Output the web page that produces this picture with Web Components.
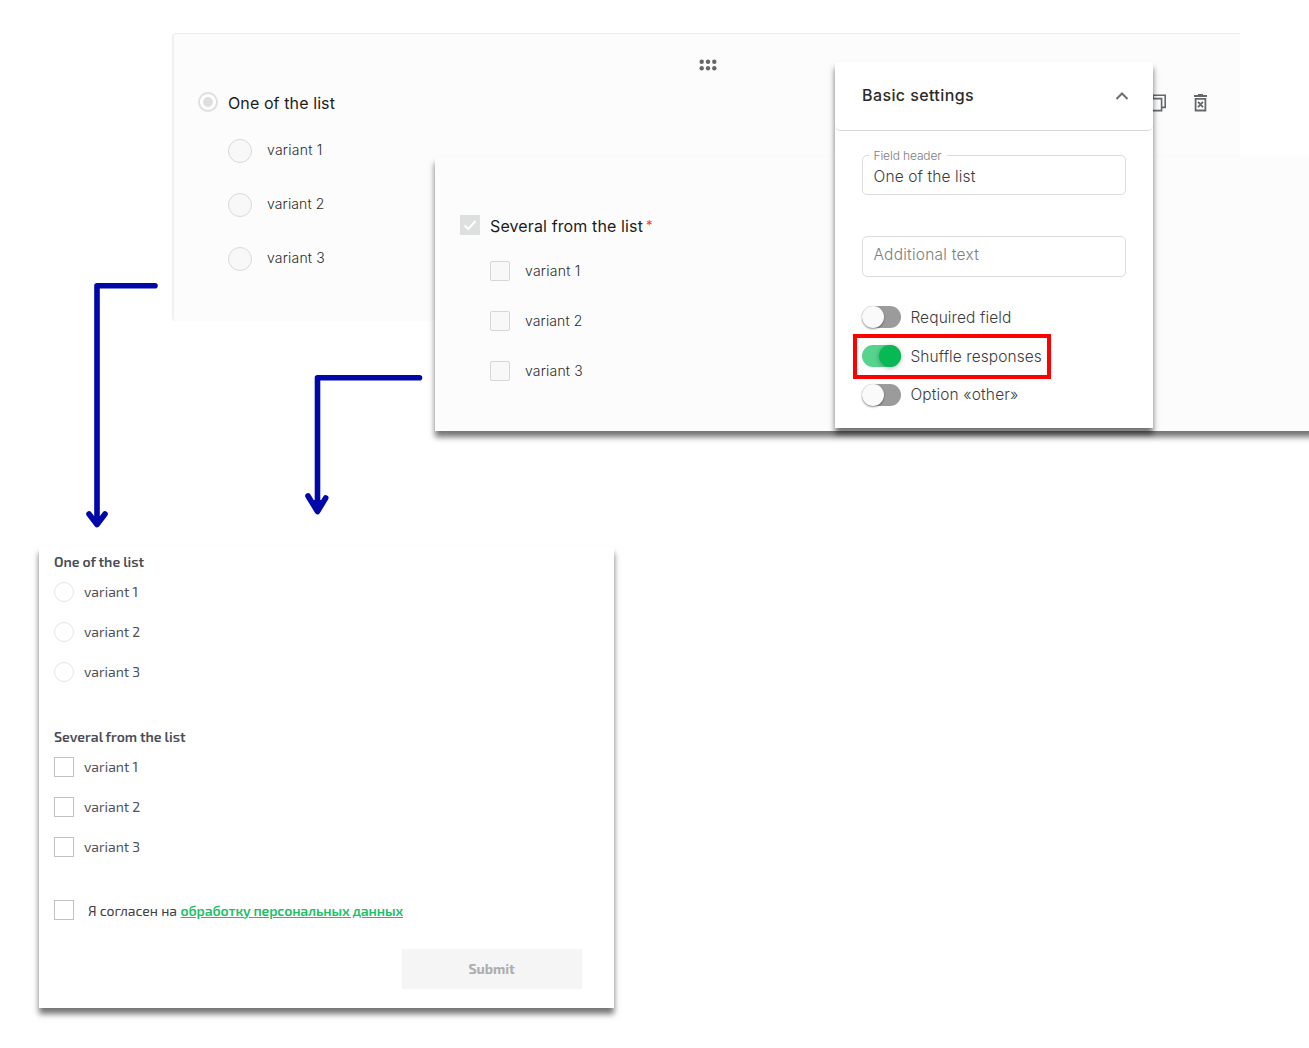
<!DOCTYPE html>
<html lang="en">
<head>
<meta charset="utf-8">
<title>Shuffle responses</title>
<style>
    html, body {
        margin: 0;
        background: #fff;
    }
</style>
</head>
<body>
<help-board></help-board>

<script>
// text on one line, letters spread over the given width
class FitText extends HTMLElement {
    constructor(){
        super()
        this.attachShadow({mode : 'open'}).innerHTML = `
        <style>
            :host {
                display: inline-block;
                flex: none;
                white-space: nowrap;
            }
        </style>
        <slot></slot>
        `
    }

    connectedCallback(){
        const width = Number(this.getAttribute('width'))
        const count = this.textContent.length
        if (!width || !count) return
        const natural = this.getBoundingClientRect().width
        this.style.letterSpacing = `${(width - natural) / count}px`
    }
}

class ChoiceRow extends HTMLElement {
    constructor(){
        super()
        this.attachShadow({mode : 'open'}).innerHTML = `
        <style>
            :host {
                display: flex;
                align-items: center;
                height: var(--row-height);
                gap: var(--row-gap);
            }

            .mark {
                box-sizing: border-box;
                flex: none;
                width: var(--mark-size, 20px);
                height: var(--mark-size, 20px);
                border: 1px solid var(--mark-border);
                border-radius: var(--mark-radius, 0);
                background: var(--mark-fill, #fff);
            }

            .label {
                padding-bottom: var(--label-lift, 0);
            }
        </style>
        <span class="mark"></span>
        <span class="label"><slot></slot></span>
        `
    }
}

class ToggleSwitch extends HTMLElement {
    constructor(){
        super()
        this.attachShadow({mode : 'open'}).innerHTML = `
        <style>
            :host {
                display: flex;
                align-items: center;
                gap: 9px;
                height: 38.7px;
            }

            .track {
                display: flex;
                flex: none;
                width: 39.4px;
                height: 22px;
                border-radius: 11px;
                background: #9b9b9b;
            }

            .knob {
                width: 22px;
                height: 22px;
                border-radius: 50%;
                background: #fafafa;
                box-shadow: 0 1px 2px rgba(0, 0, 0, .45);
            }

            :host([checked]) .track {
                justify-content: flex-end;
                background: #56d48d;
            }

            :host([checked]) .knob {
                background: #07b955;
                box-shadow: 0 1px 5px rgba(0, 0, 0, .3);
            }
        </style>
        <span class="track"><span class="knob"></span></span>
        <slot></slot>
        `
    }
}

class OutlinedField extends HTMLElement {
    connectedCallback(){
        const label = this.getAttribute('label')
        this.attachShadow({mode : 'open'}).innerHTML = `
        <style>
            :host {
                display: block;
            }

            fieldset {
                box-sizing: border-box;
                height: 41px;
                margin: 0;
                padding: 0 10.5px;
                border: 1px solid #dcdcdc;
                border-radius: 5px;
                min-width: 0;
            }

            fieldset.labelled {
                height: 47px;
            }

            legend {
                height: 14px;
                line-height: 16px;
                margin-left: -5px;
                padding: 0 5px;
                color: #7d7d7d;
                font-size: 12px;
            }

            .value {
                height: 36px;
                line-height: 36px;
            }

            .labelled .value {
                height: 28px;
                line-height: 30px;
            }
        </style>
        <fieldset class="${label ? 'labelled' : ''}">
            ${label ? `<legend><fit-text width="${this.getAttribute('label-width')}">${label}</fit-text></legend>` : ''}
            <div class="value"><slot></slot></div>
        </fieldset>
        `
    }
}

class RadioEditor extends HTMLElement {
    constructor(){
        super()
        this.attachShadow({mode : 'open'}).innerHTML = `
        <style>
            :host {
                box-sizing: border-box;
                display: flex;
                flex-direction: column;
                border-top: 1px solid #ededed;
                border-left: 2px solid #f0f0f0;
                border-radius: 4px 0 0 4px;
                background: #fcfcfc;
                color: #2c2c2c;
                font: 350 14px Inter, sans-serif;
                --row-height: 54px;
                --row-gap: 15px;
                --mark-size: 24px;
                --mark-radius: 50%;
                --mark-border: #d9d9d9;
                --mark-fill: #f8f8f8;
                --label-lift: 4px;
            }

            .grip {
                display: flex;
                justify-content: center;
                padding: 24.5px 0 0 2px;
                height: 13.5px;
            }

            .header {
                display: flex;
                align-items: center;
                justify-content: space-between;
                height: 20px;
                margin-top: 20px;
                padding: 0 32px 0 24px;
            }

            .title {
                display: flex;
                align-items: center;
                gap: 10px;
                color: #1c1c1c;
                font-size: 16px;
                font-weight: 400;
            }

            .title fit-text {
                padding-top: 2px;
            }

            .actions {
                display: flex;
                gap: 25px;
                padding-top: 1px;
            }

            .options {
                padding: 12px 0 0 54px;
            }

            svg {
                display: block;
            }
        </style>
        <div class="grip">
            <svg width="18" height="12" viewBox="0 0 18 12" fill="#65686b">
                <circle cx="2.7" cy="2.8" r="2.2"/><circle cx="9" cy="2.8" r="2.2"/><circle cx="15.3" cy="2.8" r="2.2"/>
                <circle cx="2.7" cy="9.2" r="2.2"/><circle cx="9" cy="9.2" r="2.2"/><circle cx="15.3" cy="9.2" r="2.2"/>
            </svg>
        </div>
        <div class="header">
            <div class="title">
                <svg width="20" height="20" viewBox="0 0 20 20">
                    <circle cx="10" cy="10" r="9" fill="#fff" stroke="#dedede" stroke-width="2"/>
                    <circle cx="10" cy="10" r="5" fill="#dedede"/>
                </svg>
                <fit-text width="107">One of the list</fit-text>
            </div>
            <div class="actions">
                <svg width="18" height="18" viewBox="0 0 18 18" fill="none" stroke="#65686b" stroke-width="1.6">
                    <path d="M1 4.6H12.6V16.6H1zM4 4V1.2H16.2V13.4H13"/>
                </svg>
                <svg width="16" height="18" viewBox="0 0 16 18" fill="none" stroke="#65686b" stroke-width="1.8">
                    <path d="M2 2H15M6 .9H11M3.6 4.8H13.4V16.5H3.6z"/>
                    <path d="M6 7.8L11 13.2M11 7.8L6 13.2"/>
                </svg>
            </div>
        </div>
        <div class="options">
            <choice-row><fit-text width="55.5">variant 1</fit-text></choice-row>
            <choice-row><fit-text width="57.5">variant 2</fit-text></choice-row>
            <choice-row><fit-text width="58">variant 3</fit-text></choice-row>
        </div>
        `
    }
}

class CheckboxEditor extends HTMLElement {
    constructor(){
        super()
        this.attachShadow({mode : 'open'}).innerHTML = `
        <style>
            :host {
                box-sizing: border-box;
                display: flex;
                flex-direction: column;
                padding: 58px 0 0 25px;
                background: #fcfcfc;
                box-shadow: 0 6px 6px rgba(0, 0, 0, .55);
                color: #2c2c2c;
                font: 350 14px Inter, sans-serif;
                --row-height: 50px;
                --row-gap: 15px;
                --mark-radius: 2px;
                --mark-border: #d6d6d6;
                --mark-fill: #f8f8f8;
                --label-lift: 2px;
            }

            .title {
                display: flex;
                align-items: center;
                height: 20px;
                color: #1c1c1c;
                font-size: 16px;
                font-weight: 400;
            }

            .title fit-text {
                margin: 2px 3px 0 10px;
            }

            .required {
                color: #f2383a;
                font-size: 13px;
                line-height: 18px;
            }

            .options {
                padding: 11px 0 0 30px;
            }
        </style>
        <div class="title">
            <svg width="20" height="20" viewBox="0 0 20 20">
                <path fill="#dedfdf" d="M0 0h20v20H0z"/>
                <path fill="none" stroke="#fff" stroke-width="2" d="M4.5 10.5L8.3 14L15.5 5.8"/>
            </svg>
            <fit-text width="153">Several from the list</fit-text>
            <span class="required">*</span>
        </div>
        <div class="options">
            <choice-row><fit-text width="55.5">variant 1</fit-text></choice-row>
            <choice-row><fit-text width="57.5">variant 2</fit-text></choice-row>
            <choice-row><fit-text width="58">variant 3</fit-text></choice-row>
        </div>
        `
    }
}

class SettingsPanel extends HTMLElement {
    constructor(){
        super()
        this.attachShadow({mode : 'open'}).innerHTML = `
        <style>
            :host {
                box-sizing: border-box;
                display: flex;
                flex-direction: column;
                background: #fff;
                box-shadow: 0 6px 6px rgba(0, 0, 0, .55);
                color: #3c3c3c;
                font: 350 15.5px Inter, sans-serif;
            }

            .header {
                box-sizing: border-box;
                display: flex;
                align-items: center;
                justify-content: space-between;
                height: 69px;
                padding: 0 24px 0 27px;
                border-bottom: 1px solid #d9d9d9;
                border-radius: 0 0 5px 5px;
                color: #2b2b2b;
                font-size: 16px;
                font-weight: 500;
            }

            .header fit-text {
                margin-bottom: 2px;
            }

            .fields {
                display: flex;
                flex-direction: column;
                gap: 41px;
                padding: 17px 27px 0 27px;
            }

            .additional {
                color: #7d7d7d;
            }

            .switches {
                padding: 21px 0 0 27px;
            }

            /* red frame round the highlighted option */
            .marked {
                box-sizing: border-box;
                outline: 4px solid #fe0000;
                outline-offset: 1px;
                width: 188px;
                margin: 2.7px 0 1px -4px;
                padding: 0 0 1px 4px;
                height: 35px;
            }
        </style>
        <div class="header">
            <fit-text width="112">Basic settings</fit-text>
            <svg width="14" height="10" viewBox="0 0 14 10" fill="none" stroke="#6f6f6f" stroke-width="2">
                <path d="M1.5 8L7 2.5L12.5 8"/>
            </svg>
        </div>
        <div class="fields">
            <outlined-field label="Field header" label-width="68"><fit-text width="102">One of the list</fit-text></outlined-field>
            <outlined-field class="additional"><fit-text width="105.5">Additional text</fit-text></outlined-field>
        </div>
        <div class="switches">
            <toggle-switch><fit-text width="101">Required field</fit-text></toggle-switch>
            <toggle-switch class="marked" checked><fit-text width="131.5">Shuffle responses</fit-text></toggle-switch>
            <toggle-switch><fit-text width="108">Option «other»</fit-text></toggle-switch>
        </div>
        `
    }
}

class FormPreview extends HTMLElement {
    constructor(){
        super()
        this.attachShadow({mode : 'open'}).innerHTML = `
        <style>
            :host {
                box-sizing: border-box;
                display: flex;
                flex-direction: column;
                padding: 5px 32px 0 15px;
                background: #fff;
                box-shadow: 0 6px 6px rgba(0, 0, 0, .55);
                color: #50525a;
                font: 400 14px "Exo 2", "Open Sans", sans-serif;
                --row-height: 40px;
                --row-gap: 10px;
                --mark-border: #c2c2c2;
                --label-lift: 2px;
            }

            .title {
                height: 20px;
                line-height: 20px;
                color: #4a4c55;
                font-weight: 600;
            }

            .group {
                height: 175px;
            }

            .radios {
                --mark-radius: 50%;
                --mark-border: #e6e6e6;
            }

            .consent {
                height: 22px;
                margin-top: -3px;
                --row-height: 22px;
                --row-gap: 14px;
                color: #3f4045;
            }

            a {
                color: #20bf68;
                font-weight: 600;
                margin-left: 3.5px;
            }

            a fit-text {
                text-decoration: underline;
            }

            .consent choice-row fit-text {
                padding-top: 2px;
            }

            button {
                align-self: flex-end;
                width: 180px;
                height: 40px;
                margin-top: 28px;
                padding: 0 1px 2px 0;
                border: 0;
                background: #f5f5f5;
                color: #adadad;
                font: inherit;
                font-weight: 700;
            }
        </style>
        <div class="group radios">
            <div class="title"><fit-text width="90">One of the list</fit-text></div>
            <choice-row><fit-text width="54">variant 1</fit-text></choice-row>
            <choice-row><fit-text width="56">variant 2</fit-text></choice-row>
            <choice-row><fit-text width="56">variant 3</fit-text></choice-row>
        </div>
        <div class="group">
            <div class="title"><fit-text width="131.5">Several from the list</fit-text></div>
            <choice-row><fit-text width="54">variant 1</fit-text></choice-row>
            <choice-row><fit-text width="56">variant 2</fit-text></choice-row>
            <choice-row><fit-text width="56">variant 3</fit-text></choice-row>
        </div>
        <div class="consent">
            <choice-row><fit-text width="89">Я согласен на</fit-text><a><fit-text width="222.5">обработку персональных данных</fit-text></a></choice-row>
        </div>
        <button type="button"><fit-text width="46">Submit</fit-text></button>
        `
    }
}

// windows and arrows lie freely on the board and overlap
class HelpBoard extends HTMLElement {
    constructor(){
        super()
        this.attachShadow({mode : 'open'}).innerHTML = `
        <style>
            :host {
                display: block;
                position: relative;
                width: 1309px;
                height: 1048px;
                overflow: hidden;
            }

            radio-editor, checkbox-editor, settings-panel, form-preview, svg {
                position: absolute;
            }

            radio-editor {
                left: 172px;
                top: 33px;
                width: 1068px;
                height: 288px;
            }

            checkbox-editor {
                left: 435px;
                top: 157px;
                width: 890px;
                height: 274px;
            }

            settings-panel {
                left: 835px;
                top: 62px;
                width: 318px;
                height: 366px;
            }

            form-preview {
                left: 39px;
                top: 547px;
                width: 575px;
                height: 461px;
            }

            svg {
                left: 0;
                top: 0;
            }
        </style>
        <radio-editor></radio-editor>
        <checkbox-editor></checkbox-editor>
        <settings-panel></settings-panel>
        <form-preview></form-preview>
        <svg width="430" height="540" fill="none" stroke="#0008a8" stroke-width="5.6" stroke-linecap="round" stroke-linejoin="round">
            <path d="M155 285.8H97V524M89 514L97 524.5L105 514"/>
            <path d="M419.5 377.8H317.5V510M308 496L317.5 511.5L325.7 498"/>
            <path fill="#0008a8" stroke="none" d="M312 500H323L317.5 511zM92 516H102L97 524z"/>
        </svg>
        `
    }
}

customElements.define('help-board', HelpBoard)
customElements.define('radio-editor', RadioEditor)
customElements.define('checkbox-editor', CheckboxEditor)
customElements.define('settings-panel', SettingsPanel)
customElements.define('form-preview', FormPreview)
customElements.define('outlined-field', OutlinedField)
customElements.define('choice-row', ChoiceRow)
customElements.define('toggle-switch', ToggleSwitch)
customElements.define('fit-text', FitText)
</script>
</body>
</html>
